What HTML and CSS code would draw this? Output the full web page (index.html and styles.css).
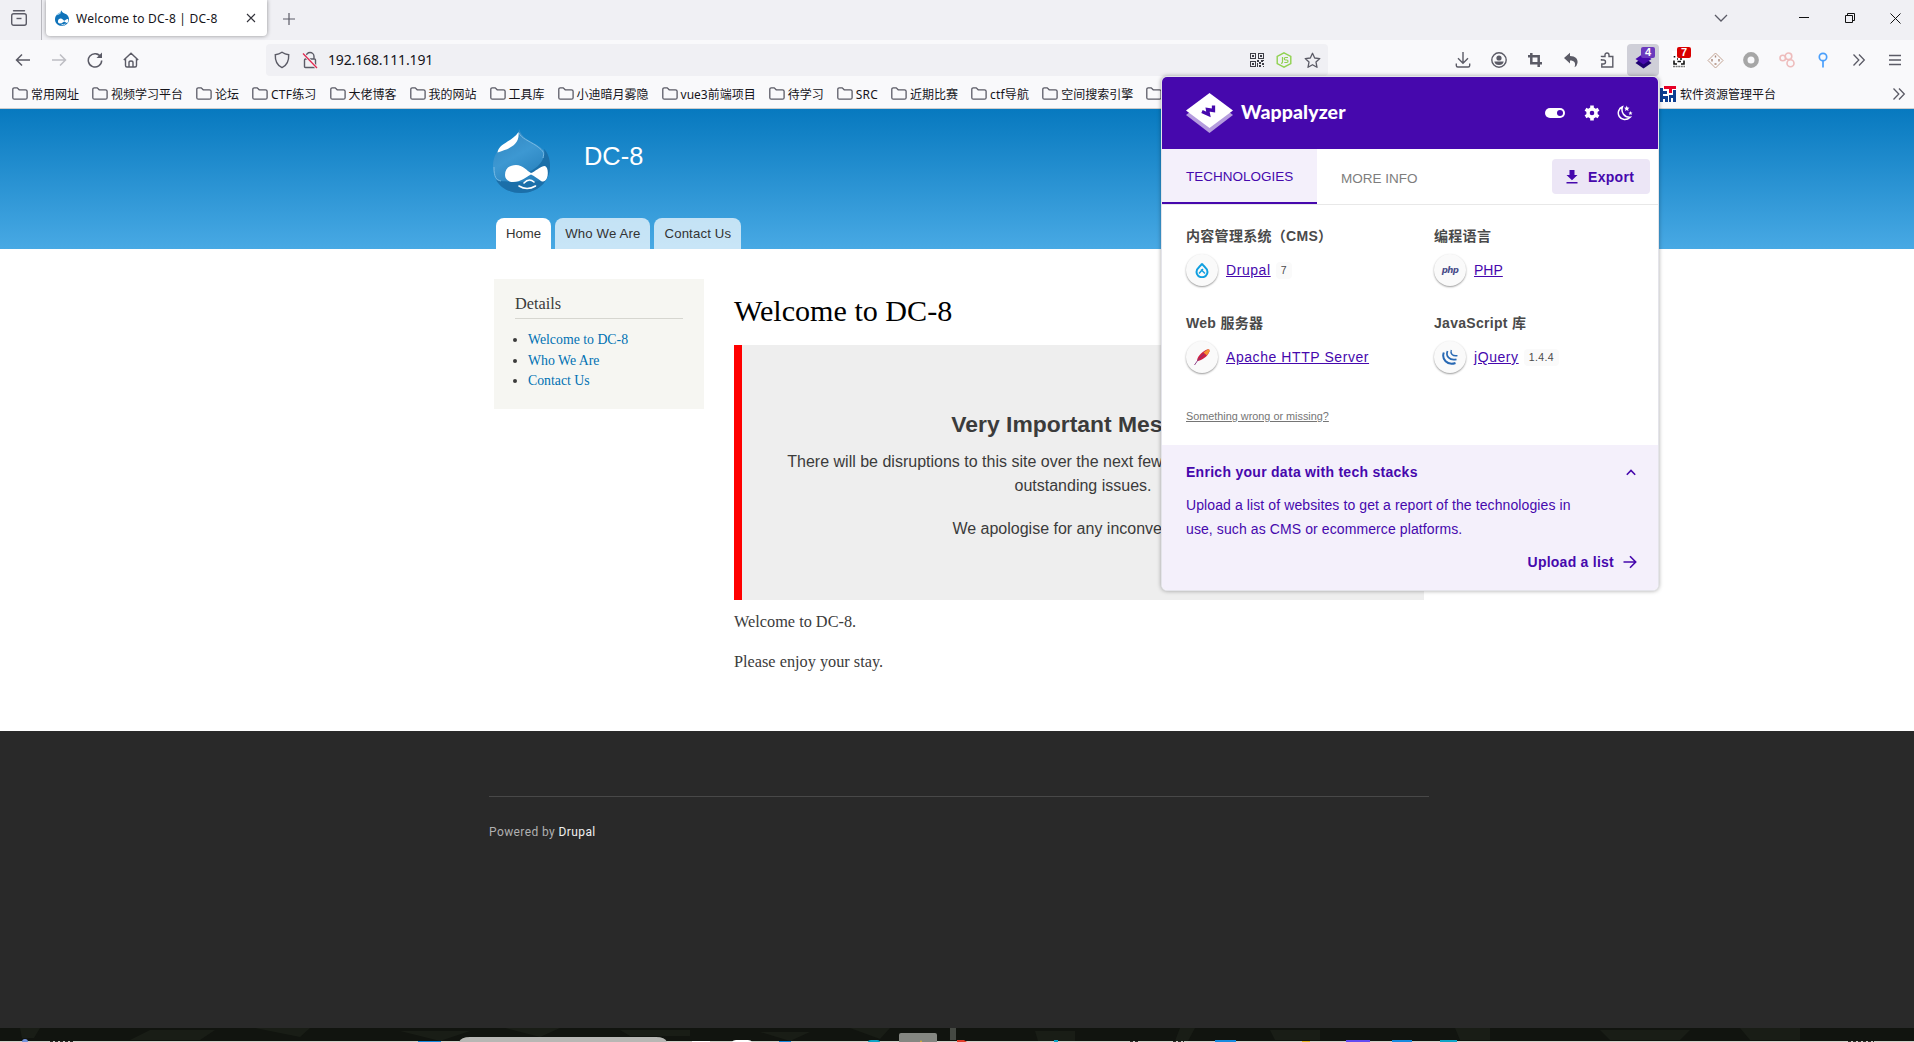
FILE: index.html
```html
<!DOCTYPE html>
<html lang="zh-CN">
<head>
	<meta charset="UTF-8">
	<meta name="viewport" content="width=device-width, initial-scale=1.0">
	<title>Welcome to DC-8 | DC-8</title>
	<link rel="stylesheet" href="styles.css">
</head>
<body>
	<svg class="defs" width="0" height="0">
		<symbol id="folder" viewBox="0 0 16 16"><path d="M.8 11.7V3.3C.8 2.300 1.300 1.800 2.300 1.800H5.200L7.200 3.800H13.500C14.500 3.800 15.100 4.400 15.100 5.300V11.700C15.100 12.700 14.500 13.200 13.500 13.200H2.300C1.300 13.200.8 12.700.8 11.700Z" fill="none" stroke="#5b5b66" stroke-width="1.300"/></symbol>
		<symbol id="more" viewBox="0 0 14 14"><path d="M1.500 1.500 6.800 7 1.500 12.500M7 1.500 12.300 7 7 12.500" fill="none" stroke="#5b5b66" stroke-width="1.300"/></symbol>
		<linearGradient id="drop-fill" x1="0" y1="0" x2="0.5" y2="1">
			<stop offset="0" stop-color="#2f83bd"/><stop offset=".5" stop-color="#3d98d2"/><stop offset="1" stop-color="#237cb8"/>
		</linearGradient>
	</svg>

	<div class="tab-bar">
		<div class="tab-view">
			<svg width="18" height="18" viewBox="0 0 18 18" fill="none" stroke="#5b5b66" stroke-width="1.400"><path d="M3.500 1.700H14.500" stroke-linecap="round"/><rect x="1.700" y="4.700" width="14.600" height="11.600" rx="2"/><path d="M6.500 9.500H11.500"/></svg>
		</div>
		<div class="tab">
			<svg width="14" height="16" viewBox="0 0 57 64"><path d="M26 0C28 10 36 11 46 17C53 22 57 29 57 37C57 53 44 64 28 64S0 53 0 37C0 28 4 22 11 16C18 11 25 9 26 0Z" fill="#0f73ba"/><path d="M5 22C8 13 20 13 25 7C26 16 12 20 5 22Z" fill="#9cd0ee"/><path d="M12 46C12 39 17 34 23 34C30 34 34 41 38 43C42 41 47 35 52 36C56 38 55 52 48 52C45 51 41 48 38 46C33 49 28 54 20 54C15 54 12 51 12 46Z" fill="#fff"/><path d="M26 57Q34 63 43 56" stroke="#fff" stroke-width="3" fill="none"/></svg>
			<span class="tab-title">Welcome to DC-8 | DC-8</span>
			<svg width="10" height="10" viewBox="0 0 10 10"><path d="M1 1 9 9M9 1 1 9" stroke="#33333b" stroke-width="1.100"/></svg>
		</div>
		<svg class="new-tab" width="12" height="12" viewBox="0 0 12 12"><path d="M6 0V12M0 6H12" stroke="#5b5b66" stroke-width="1.200"/></svg>
		<div class="window-buttons">
			<svg width="14" height="8" viewBox="0 0 14 8"><path d="M1 1 7 7 13 1" fill="none" stroke="#5b5b66" stroke-width="1.300"/></svg>
			<svg width="10" height="10" viewBox="0 0 10 10"><path d="M0 4.500H10" stroke="#111"/></svg>
			<svg width="10" height="10" viewBox="0 0 10 10"><path d="M.5 2.500H7.500V9.500H.5ZM2.500 2.500V.5H9.500V7.500H7.500" fill="none" stroke="#111"/></svg>
			<svg width="11" height="11" viewBox="0 0 11 11"><path d="M.5 .5 10.500 10.500M10.500 .5 .5 10.500" stroke="#111"/></svg>
		</div>
	</div>

	<div class="nav-bar">
		<div class="nav-buttons">
			<svg width="16" height="16" viewBox="0 0 16 16"><path d="M15 8H1.500M7 2.500 1.500 8 7 13.500" fill="none" stroke="#5b5b66" stroke-width="1.500"/></svg>
			<svg width="16" height="16" viewBox="0 0 16 16"><path d="M1 8H14.500M9 2.500 14.500 8 9 13.500" fill="none" stroke="#bdbdc3" stroke-width="1.500"/></svg>
			<svg width="16" height="16" viewBox="0 0 16 16"><path d="M13.800 5A6.700 6.700 0 1 0 14.700 8.500" fill="none" stroke="#5b5b66" stroke-width="1.500"/><path d="M15 .5V6H9.500Z" fill="#5b5b66"/></svg>
			<svg width="16" height="16" viewBox="0 0 16 16"><path d="M.8 8 8 1.200 15.200 8M2.500 6.500V13.500Q2.500 15 4 15H12Q13.500 15 13.500 13.500V6.500M6 15V10.500Q6 9 8 9T10 10.500V15" fill="none" stroke="#5b5b66" stroke-width="1.400"/></svg>
		</div>
		<div class="url-bar">
			<svg width="16" height="18" viewBox="0 0 16 18"><path d="M8 1.200Q11 3.300 14.700 3.700C15 10 12.500 14.500 8 16.600C3.500 14.500 1 10 1.300 3.700Q5 3.300 8 1.200Z" fill="none" stroke="#5b5b66" stroke-width="1.400"/></svg>
			<svg width="16" height="18" viewBox="0 0 16 18"><path d="M4 8V5.500A4 4 0 0 1 12 5.500V8M3.500 8H12.500Q13.500 8 13.500 9V15.500Q13.500 16.500 12.500 16.500H3.500Q2.500 16.500 2.500 15.500V9Q2.500 8 3.500 8Z" fill="none" stroke="#5b5b66" stroke-width="1.400"/><path d="M1 2.500 15 17" stroke="#f0f0f4" stroke-width="3"/><path d="M1 2.500 15 17" stroke="#e22850" stroke-width="1.300"/></svg>
			<span class="url">192.168.111.191</span>
			<svg width="14" height="14" viewBox="0 0 14 14" fill="#3d3d45"><path d="M0 0H6V6H0ZM1 1V5H5V1ZM8 0H14V6H8ZM9 1V5H13V1ZM0 8H6V14H0ZM1 9V13H5V9Z" fill-rule="evenodd"/><path d="M2 2H4V4H2ZM10 2H12V4H10ZM2 10H4V12H2ZM7 7H9V9H7ZM9 9H11V11H9ZM11 7H14V8H13V9H11ZM7 10H8V14H7ZM9 12H11V14H9ZM12 10H14V12H12ZM13 13H14V14H13Z"/></svg>
			<svg width="16" height="16" viewBox="0 0 16 16" fill="none" stroke="#8fd14f" stroke-width="1.400"><path d="M8 .8 14.800 4.500V11.500L8 15.200 1.200 11.500V4.500Z"/><path d="M6.500 5V10Q6.500 11.300 5 11.300M12 5.500H9.500Q8.300 5.500 8.300 6.700T9.500 8H10.800Q12 8 12 9.200T10.800 10.500H8.300" stroke-width="1.200"/></svg>
			<svg width="17" height="17" viewBox="0 0 17 17"><path d="M8.500 1.300 10.700 6 15.800 6.600 12 10.100 13 15.300 8.500 12.700 4 15.300 5 10.100 1.200 6.600 6.300 6Z" fill="none" stroke="#5b5b66" stroke-width="1.300" stroke-linejoin="round"/></svg>
		</div>
		<div class="toolbar">
			<div class="tool"><svg width="16" height="16" viewBox="0 0 16 16"><path d="M8 0V11M3 6.300 8 11.200 13 6.300M1.300 11.500V13.500Q1.300 15 2.800 15H13.200Q14.700 15 14.700 13.500V11.500" fill="none" stroke="#5b5b66" stroke-width="1.400"/></svg></div>
			<div class="tool"><svg width="16" height="16" viewBox="0 0 16 16"><circle cx="8" cy="8" r="7.200" fill="none" stroke="#5b5b66" stroke-width="1.400"/><circle cx="8" cy="6" r="2.600" fill="#5b5b66"/><path d="M3.300 9.500H12.700Q12 13 8 13T3.300 9.500Z" fill="#5b5b66"/></svg></div>
			<div class="tool"><svg width="16" height="16" viewBox="0 0 16 16"><path d="M4.300 1V11.200H15M1 4.300H11.700V15" fill="none" stroke="#5b5b66" stroke-width="2.500"/></svg></div>
			<div class="tool"><svg width="16" height="16" viewBox="0 0 16 16"><path d="M1 6 7 .8V4C12.500 4 15 7 14.500 11Q14 14 11.500 15.200C13 11 11.500 8.500 7 8.500V11.500Z" fill="#5b5b66"/></svg></div>
			<div class="tool"><svg width="16" height="16" viewBox="0 0 16 16"><path d="M2.500 5V4.500H6V3A2 2 0 0 1 10 3V4.500H13.800V15H2.800V12H4.500A2 2 0 0 0 4.500 8H2.500V7" fill="none" stroke="#5b5b66" stroke-width="1.400"/></svg></div>
			<div class="tool active">
				<svg width="17" height="18" viewBox="0 0 17 18"><path d="M.5 12 3 10H14L16.500 12 8.500 17.500Z" fill="#1d0070"/><path d="M.5 8 8.500 2.500 16.500 8 8.500 13.500Z" fill="#4608ad"/></svg>
				<span class="badge badge-purple">4</span>
			</div>
			<div class="tool">
				<svg width="14" height="18" viewBox="0 0 14 18"><rect width="14" height="18" fill="#fff"/><path d="M2.500 5V6.500M2 9.500V13H5M12 9.500V13H9M5 8H6M8 8H10M5.500 10.500H9" fill="none" stroke="#111" stroke-width="1.600"/><path d="M1 15.500H13" stroke="#777" stroke-width="1.500" stroke-dasharray="2 .6"/></svg>
				<span class="badge badge-red">7</span>
			</div>
			<div class="tool"><svg width="17" height="17" viewBox="0 0 17 17" fill="none" stroke="#c3a493"><path d="M8.500 1 16 8.500 8.500 16 1 8.500Z"/><path d="M8.500 3.500V5.500M5 7V9.500M12 7V9.500M7.500 12H9.500" stroke-width="1.400" stroke="#a98778"/></svg></div>
			<div class="tool"><svg width="16" height="16" viewBox="0 0 16 16"><circle cx="8" cy="8" r="5.700" fill="none" stroke="#a6a6a6" stroke-width="4.400"/></svg></div>
			<div class="tool"><svg width="16" height="16" viewBox="0 0 16 16" fill="none" stroke="#eebcbc" stroke-width="1.600"><circle cx="3.800" cy="6" r="2.800"/><circle cx="9.500" cy="4.300" r="3.300"/><circle cx="11.500" cy="11.300" r="3.500"/></svg></div>
			<div class="tool"><svg width="10" height="16" viewBox="0 0 10 16" fill="none" stroke="#4a9ffb" stroke-width="1.700"><circle cx="5" cy="5" r="3.700"/><path d="M5 8.500V15.500"/></svg></div>
			<div class="tool"><svg width="14" height="14"><use href="#more"/></svg></div>
			<div class="tool"><svg width="14" height="12" viewBox="0 0 14 12"><path d="M1 1.500H13M1 6H13M1 10.500H13" stroke="#5b5b66" stroke-width="1.400"/></svg></div>
		</div>
	</div>

	<div class="bookmarks">
		<div class="bookmark"><svg width="16" height="16"><use href="#folder"/></svg>常用网址</div>
		<div class="bookmark"><svg width="16" height="16"><use href="#folder"/></svg>视频学习平台</div>
		<div class="bookmark"><svg width="16" height="16"><use href="#folder"/></svg>论坛</div>
		<div class="bookmark latin"><svg width="16" height="16"><use href="#folder"/></svg>CTF练习</div>
		<div class="bookmark"><svg width="16" height="16"><use href="#folder"/></svg>大佬博客</div>
		<div class="bookmark"><svg width="16" height="16"><use href="#folder"/></svg>我的网站</div>
		<div class="bookmark"><svg width="16" height="16"><use href="#folder"/></svg>工具库</div>
		<div class="bookmark"><svg width="16" height="16"><use href="#folder"/></svg>小迪暗月雾隐</div>
		<div class="bookmark"><svg width="16" height="16"><use href="#folder"/></svg>vue3前端项目</div>
		<div class="bookmark"><svg width="16" height="16"><use href="#folder"/></svg>待学习</div>
		<div class="bookmark latin"><svg width="16" height="16"><use href="#folder"/></svg>SRC</div>
		<div class="bookmark"><svg width="16" height="16"><use href="#folder"/></svg>近期比赛</div>
		<div class="bookmark latin"><svg width="16" height="16"><use href="#folder"/></svg>ctf导航</div>
		<div class="bookmark"><svg width="16" height="16"><use href="#folder"/></svg>空间搜索引擎</div>
		<div class="bookmark"><svg width="16" height="16"><use href="#folder"/></svg></div>
		<div class="bookmark bookmark-last">
			<svg width="16" height="16" viewBox="0 0 16 16"><path d="M0 0H16V16H0Z" fill="#fff"/><path d="M4 0H16V3H12V7H9V3H4Z" fill="#e60026"/><path d="M0 2H3V5H7V8H3V10H8V16H5V13H3V16H0ZM13 4H16V16H13V12H11V16H9V9H13Z" fill="#0c3d91"/></svg>软件资源管理平台
		</div>
		<svg class="bookmarks-more" width="14" height="14"><use href="#more"/></svg>
	</div>

	<div class="site-header">
		<div class="container">
			<div class="brand">
				<svg class="logo" width="57" height="64" viewBox="0 0 57 64">
					<path d="M26 0C29 9 35 11 44 16C53 21.500 57 29 57 37C57 53 44 64 28 64S0 53 0 37C0 28 4 21 11 16C18 11 26 9 26 0Z" fill="url(#drop-fill)"/>
					<path d="M51 20C53 30 46 38 36 43L48 51C46 54 6 53 3 51C8 60 18 64 28 64C44 64 57 53 57 37C57 30 55 24 51 20Z" fill="#1b6fa9"/>
					<path d="M26 4C28 9 36 12 43 16.500C52 23 51 24 50 29M1 38C1 48 3 51 8 52" stroke="#76b9e3" stroke-width="1" fill="none"/>
					<path d="M4.500 23.500C6 14 19 13 25.500 3C27 17 15 20 4.500 23.500Z" fill="#fff"/>
					<path d="M12 46C12 39 17 36 23 36C30 36 34 42 38 44C42 43 47 37 52 37C55 38 55.500 45 54 49C52 53 50 53 48 52C45 50 41 47 38 45.500C33 48 28 53 20 53C15 53 12 50 12 46Z" fill="#fff"/>
					<path d="M31 54Q36 48.500 41 53M26 57Q34 62 42.500 57" stroke="#fff" stroke-width="1.600" stroke-linecap="round" fill="none"/>
				</svg>
				<span class="site-name">DC-8</span>
			</div>
			<div class="menu">
				<a class="menu-item current">Home</a>
				<a class="menu-item">Who We Are</a>
				<a class="menu-item">Contact Us</a>
			</div>
		</div>
	</div>

	<div class="main">
		<div class="sidebar">
			<h2>Details</h2>
			<ul>
				<li><a>Welcome to DC-8</a></li>
				<li><a>Who We Are</a></li>
				<li><a>Contact Us</a></li>
			</ul>
		</div>
		<div class="content">
			<h1>Welcome to DC-8</h1>
			<div class="notice">
				<h2>Very Important Message</h2>
				<p>There will be disruptions to this site over the next few days while we resolve various<br>outstanding issues.</p>
				<p>We apologise for any inconvenience.</p>
			</div>
			<p>Welcome to DC-8.</p>
			<p>Please enjoy your stay.</p>
		</div>
	</div>

	<div class="footer">
		<div class="footer-inner">Powered by <a>Drupal</a></div>
	</div>

	<!-- top edge of the desktop taskbar -->
	<svg class="taskbar" width="1914" height="14" viewBox="0 0 1914 14">
		<rect width="1914" height="14" fill="#11140f"/>
		<path d="M20 0H40L34 10H22ZM150 2H215L200 12H130ZM255 0H310L300 9ZM400 3H470L440 13ZM505 0H560L540 9ZM620 2H690V8H630ZM760 4H810L790 13ZM850 0H890L880 11ZM1035 3H1075V13H1038ZM1180 0H1195L1188 13H1175ZM1270 2H1320V12H1275ZM1455 0H1490V12H1460ZM1600 2H1690L1680 12H1610ZM1740 0H1800V12H1750Z" fill="#191d16"/>
		<rect y="13" width="1914" height="1" fill="#cfd1c8"/>
		<path d="M459 14Q461 9 470 9H656Q665 9 667 14Z" fill="#b7b7b4"/>
		<path d="M899 14V7Q899 5 901 5H935Q937 5 937 7V14Z" fill="#858782"/>
		<rect x="950" width="6" height="12" fill="#454943"/>
		<path d="M418 13H441V14H418ZM779 13H791V14H779ZM1215 12H1236V14H1215ZM1392 12H1412V14H1392Z" fill="#168bdf"/>
		<path d="M732 14Q733 12 736 12H748Q751 12 752 14ZM692 13H710V14H692Z" fill="#fff"/>
		<path d="M868 14Q868 12 871 12H877Q880 12 880 14ZM1440 12H1457V14H1440ZM1054 12H1058V14H1054Z" fill="#0ea5c6"/>
		<path d="M920 14L921 12L922 14ZM1302 13H1310V14H1302Z" fill="#e5b721"/>
		<path d="M957 14V12H964L967 14Z" fill="#e03b28"/>
		<rect x="1346" y="12" width="24" height="2" fill="#624bf2"/>
		<circle cx="25" cy="14" r="3" fill="#7594dc"/>
		<path d="M50 13.500H74M1848 13.500H1874M1130 13.500H1139M1173 13.500H1184" stroke="#30302c" stroke-dasharray="3 2"/>
	</svg>

	<div class="popup">
		<div class="popup-header">
			<svg width="47" height="40" viewBox="0 0 47 40"><path d="M0 22 23.500 4 47 22 23.500 40Z" fill="#b59cde"/><path d="M0 17.500 23.500 0 47 17.500 23.500 35Z" fill="#fff"/><path d="M16 18.500 22.500 21.500 21.500 16.500 27.500 17.500 27.500 12.500" fill="none" stroke="#4608ad" stroke-width="3.300"/></svg>
			<span class="popup-name">Wappalyzer</span>
			<div class="popup-actions">
				<svg width="20" height="10" viewBox="0 0 20 10"><rect width="20" height="10" rx="5" fill="#fff"/><circle cx="15" cy="5" r="3" fill="#4608ad"/></svg>
				<svg width="16" height="16" viewBox="0 0 16 16"><circle cx="8" cy="8" r="4" fill="none" stroke="#fff" stroke-width="3.400"/><path d="M8 .5V3.500M8 12.500V15.500M1.500 4.250 4.100 5.750M11.900 10.250 14.500 11.750M1.500 11.750 4.100 10.250M11.900 5.750 14.500 4.250" stroke="#fff" stroke-width="3.600"/></svg>
				<svg width="16" height="16" viewBox="0 0 16 16"><path d="M5.500 1.800C1.500 3.500.2 8 2.300 11.500S9.500 15.800 13.200 12.200C7.500 12.500 3.500 7.500 5.500 1.800Z" fill="none" stroke="#fff" stroke-width="1.500"/><path d="M9.700.5 10.500 2.500 12.500 2.700 11 4 11.500 6 9.700 5 8 6 8.500 4 7 2.700 9 2.500ZM13.500 6 14.200 7.400 15.500 7.600 14.500 8.600 14.700 10 13.500 9.300 12.200 10 12.500 8.600 11.500 7.600 12.900 7.400Z" fill="#fff"/></svg>
			</div>
		</div>
		<div class="popup-tabs">
			<div class="popup-tab selected">TECHNOLOGIES</div>
			<div class="popup-tab">MORE INFO</div>
			<div class="export-btn">
				<svg width="12" height="14" viewBox="0 0 12 14"><path d="M3.500 0H8.500V5H11.500L6 10.300.5 5H3.500ZM.5 12H11.500V13.500H.5Z" fill="#4608ad"/></svg>
				Export
			</div>
		</div>
		<div class="tech-grid">
			<div class="tech">
				<h3>内容管理系统（CMS）</h3>
				<div class="tech-row">
					<span class="tech-icon"><svg width="14" height="16" viewBox="0 0 14 16"><path d="M7 1.500C7.500 4 12.500 5.500 12.500 10A5.500 5.200 0 0 1 1.500 10C1.500 5.500 6.500 4 7 1.500Z" fill="none" stroke="#109fe0" stroke-width="2"/><path d="M4 11.500 8 7M6 7.500 10 11.500" stroke="#109fe0" stroke-width="1.500"/></svg></span>
					<a>Drupal</a><span class="version">7</span>
				</div>
			</div>
			<div class="tech">
				<h3>编程语言</h3>
				<div class="tech-row">
					<span class="tech-icon php">php</span>
					<a class="php-link">PHP</a>
				</div>
			</div>
			<div class="tech">
				<h3>Web 服务器</h3>
				<div class="tech-row">
					<span class="tech-icon"><svg width="16" height="16" viewBox="0 0 16 16"><path d="M3 12C3 7 10 1 14 .3Q16 .2 15.500 2.300C14 7 8 12 3 12Z" fill="#cb2144"/><path d="M9.500 3.500 14 .3Q16 .2 15.500 2.300L13 6.500Z" fill="#f59331"/><path d="M.5 16 4 11 10 5" fill="none" stroke="#84317e" stroke-width=".9"/></svg></span>
					<a>Apache HTTP Server</a>
				</div>
			</div>
			<div class="tech">
				<h3>JavaScript 库</h3>
				<div class="tech-row">
					<span class="tech-icon"><svg width="16" height="16" viewBox="0 0 16 16" fill="none" stroke="#2869b4" stroke-width="2"><path d="M1.800 3.500C-.5 10 5 17 13.500 14"/><path d="M5.500 2C3.500 7 7.500 12 14.500 10.300" stroke-width="1.700"/><path d="M9.300 1C8 4.500 10.500 7.500 15.500 6.600" stroke-width="1.300"/></svg></span>
					<a>jQuery</a><span class="version">1.4.4</span>
				</div>
			</div>
		</div>
		<a class="report">Something wrong or missing?</a>
		<div class="enrich">
			<div class="enrich-title">
				Enrich your data with tech stacks
				<svg width="10" height="7" viewBox="0 0 10 7"><path d="M.8 5.800 5 1.500 9.200 5.800" fill="none" stroke="#4608ad" stroke-width="1.600"/></svg>
			</div>
			<p>Upload a list of websites to get a report of the technologies in<br>use, such as CMS or ecommerce platforms.</p>
			<div class="upload">
				Upload a list
				<svg width="14" height="14" viewBox="0 0 14 14"><path d="M.5 7H12.500M7 1.200 12.700 7 7 12.800" fill="none" stroke="#4608ad" stroke-width="1.600"/></svg>
			</div>
		</div>
	</div>
</body>
</html>
```

FILE: styles.css
```css
* {
	box-sizing: border-box;
}

body {
	margin: 0;
	height: 1042px;
	overflow: hidden;
	position: relative;
	background: #fff;
	color: #3b3b3b;
	font-family: "Liberation Sans", "Noto Sans CJK SC", sans-serif;
}

h1, h2, h3, p, ul {
	margin: 0;
	padding: 0;
}

svg {
	display: block;
	flex: none;
}

.defs {
	position: absolute;
}

/* browser window */
.tab-bar {
	display: flex;
	height: 40px;
	background: #f0f0f4;
	font: 12px "Noto Sans", sans-serif;
	color: #15141a;
}

.tab-view {
	width: 42px;
	padding: 9px 0 0 10px;
	border-right: 1px solid #b9b9bf;
}

.tab {
	display: flex;
	align-items: center;
	width: 221px;
	height: 36px;
	margin-left: 4px;
	padding: 0 11px 0 9px;
	background: #fff;
	border-radius: 0 0 4px 4px;
	box-shadow: 0 0 4px rgba(0, 0, 0, 0.4);
}

.tab-title {
	flex: 1;
	margin-left: 7px;
	font-size: 12px;
	letter-spacing: 0.22px;
	white-space: nowrap;
}

.new-tab {
	margin: 13px 0 0 16px;
}

.window-buttons {
	display: flex;
	align-items: center;
	height: 36px;
	margin-left: auto;
	padding-right: 13px;
}

.window-buttons svg:nth-child(1) {
	margin-right: 71px;
}

.window-buttons svg:nth-child(2) {
	margin-right: 36px;
}

.window-buttons svg:nth-child(3) {
	margin-right: 35px;
}

.nav-bar {
	display: flex;
	align-items: center;
	height: 40px;
	background: #f9f9fb;
}

.nav-buttons {
	display: flex;
	gap: 20px;
	width: 266px;
	padding-left: 15px;
}

.url-bar {
	display: flex;
	align-items: center;
	width: 1062px;
	height: 32px;
	padding: 0 7px 0 8px;
	gap: 12px;
	background: #f0f0f4;
	border-radius: 4px;
}

.url {
	flex: 1;
	font: 14px "Noto Sans", sans-serif;
	letter-spacing: -0.15px;
	color: #15141a;
	margin: -1px 0 0 -2px;
}

.toolbar {
	display: flex;
	gap: 4px;
	margin-left: auto;
	padding-right: 3px;
}

.tool {
	display: flex;
	align-items: center;
	justify-content: center;
	position: relative;
	width: 32px;
	height: 32px;
	border-radius: 4px;
}

.tool.active {
	background: #cfcfd8;
}

.badge {
	position: absolute;
	top: 3px;
	right: 4px;
	width: 14px;
	height: 11px;
	border-radius: 2px;
	color: #fff;
	font: bold 11px/11px "Liberation Sans", sans-serif;
	text-align: center;
}

.badge-purple {
	background: #6b39bd;
}

.badge-red {
	background: #d90000;
}

.bookmarks {
	display: flex;
	align-items: center;
	gap: 13px;
	height: 29px;
	padding: 0 8px 0 12px;
	background: #f9f9fb;
	border-bottom: 1px solid #cccccc;
	color: #15141a;
	font: 12px "Noto Sans", "Noto Sans CJK SC", sans-serif;
}

.bookmark {
	display: flex;
	align-items: center;
	gap: 3px;
	height: 28px;
	white-space: nowrap;
}

.bookmark.latin {
	letter-spacing: 0.2px;
}

.bookmark-last {
	margin-left: auto;
	gap: 4px;
}

.bookmarks-more {
	margin-left: 103px;
}

/* site */
.site-header {
	height: 140px;
	background: linear-gradient(#0779bf, #48a9e4);
}

.container {
	display: flex;
	flex-direction: column;
	justify-content: space-between;
	width: 936px;
	height: 140px;
	margin: 0 auto 0 493px;
	padding-top: 20px;
}

.brand {
	display: flex;
}

.site-name {
	margin: 12px 0 0 34px;
	font-size: 25.4px;
	line-height: 30px;
	color: #fff;
}

.menu {
	display: flex;
	gap: 4px;
	padding-left: 3px;
}

.menu-item {
	height: 31px;
	padding: 0 10px;
	border-radius: 8px 8px 0 0;
	background: rgba(255, 255, 255, 0.7);
	color: #333;
	font-size: 13.2px;
	line-height: 31px;
	letter-spacing: 0.15px;
}

.menu-item.current {
	background: #fff;
	letter-spacing: 0;
}

.main {
	display: flex;
	gap: 30px;
	height: 482px;
	padding: 30px 0 0 494px;
	font-family: "Liberation Serif", serif;
}

.sidebar {
	width: 210px;
	height: 130px;
	padding: 13px 21px;
	background: #f6f6f2;
}

.sidebar h2 {
	height: 27px;
	border-bottom: 1px solid #d6d6d0;
	font-size: 16.3px;
	font-weight: normal;
	line-height: 24px;
}

.sidebar ul {
	margin-top: 11px;
	padding-left: 13px;
	font-size: 13.8px;
	line-height: 20.5px;
}

.sidebar a {
	color: #0071b3;
}

.content {
	width: 690px;
	font-size: 16.3px;
}

.content h1 {
	margin: 15px 0 17px;
	font-size: 30.1px;
	font-weight: normal;
	line-height: 34px;
	color: #000;
}

.content > p {
	margin-bottom: 16px;
	line-height: 24px;
}

.notice {
	height: 255px;
	margin-bottom: 10px;
	padding-top: 65px;
	background: #eee;
	border-left: 8px solid #f00;
	font-family: "Liberation Sans", sans-serif;
	text-align: center;
}

.notice h2 {
	font-size: 22.9px;
	line-height: 28px;
	margin-bottom: 12px;
}

.notice p {
	margin-bottom: 19px;
	font-size: 16px;
	line-height: 24px;
	white-space: nowrap;
}

.footer {
	height: 297px;
	padding: 65px 0 0 489px;
	background: #292929;
}

.footer-inner {
	width: 940px;
	padding-top: 27px;
	border-top: 1px solid #484848;
	color: #b0b0b0;
	font: 12px/16px Roboto, sans-serif;
	letter-spacing: 0.4px;
}

.footer-inner a {
	color: #f0f0f0;
}

/* extension popup */
.popup {
	position: absolute;
	top: 76px;
	left: 1161px;
	width: 498px;
	height: 515px;
	border: 1px solid #e4e4ea;
	border-radius: 6px;
	overflow: hidden;
	background: #fff;
	box-shadow: 0 0 4px rgba(0, 0, 0, 0.35);
}

.popup-header {
	display: flex;
	align-items: center;
	height: 72px;
	padding: 0 25px 0 24px;
	background: #4608ad;
}

.popup-name {
	margin: -3px 0 0 8px;
	color: #fff;
	font: 900 19.5px Lato, sans-serif;
	letter-spacing: 0.1px;
}

.popup-actions {
	display: flex;
	align-items: center;
	gap: 17px;
	margin-left: auto;
}

.popup-actions svg:first-child {
	margin-right: 2px;
}

.popup-tabs {
	display: flex;
	height: 56px;
	border-bottom: 1px solid #e8e8e8;
}

.popup-tab {
	height: 55px;
	padding: 3px 24px 0;
	color: #7d7d7d;
	font-size: 13.5px;
	line-height: 54px;
}

.popup-tab.selected {
	width: 155px;
	padding-top: 1px;
	background: #f4f0fb;
	border-bottom: 2px solid #4608ad;
	color: #4608ad;
}

.export-btn {
	display: flex;
	align-items: center;
	gap: 10px;
	width: 98px;
	height: 35px;
	margin: 10px 8px 0 auto;
	padding-left: 14px;
	border-radius: 4px;
	background: #ece6f6;
	color: #4608ad;
	font-size: 14px;
	font-weight: bold;
	letter-spacing: 0.3px;
}

.tech-grid {
	display: grid;
	grid-template-columns: 248px 224px;
	grid-auto-rows: 87px;
	padding: 20px 0 0 24px;
}

.tech h3 {
	height: 22px;
	font-size: 14px;
	line-height: 22px;
	letter-spacing: 0.3px;
	color: #4a4a4a;
}

.tech-row {
	display: flex;
	align-items: center;
	margin-top: 7px;
	font-size: 14px;
	letter-spacing: 0.57px;
}

.tech-row a {
	color: #4608ad;
	text-decoration: underline;
}

.tech-row .php-link {
	letter-spacing: 0;
}

.tech-icon {
	display: flex;
	align-items: center;
	justify-content: center;
	width: 32px;
	height: 32px;
	margin-right: 8px;
	border-radius: 50%;
	background: #fafafa;
	box-shadow: 0 1px 2px rgba(0, 0, 0, 0.4);
}

.php {
	color: #484c89;
	font: italic bold 8.5px "DejaVu Sans", sans-serif;
	letter-spacing: -0.5px;
}

.version {
	margin-left: 5px;
	padding: 0 5px;
	border-radius: 4px;
	background: #fafafa;
	color: #4a4a4a;
	font-size: 10.5px;
	line-height: 17px;
	letter-spacing: 0.4px;
}

.report {
	display: block;
	height: 46px;
	margin: 0 24px;
	color: #757575;
	font-size: 10.85px;
	line-height: 34px;
	text-decoration: underline;
}

.enrich {
	height: 145px;
	padding: 17px 21px 0 24px;
	background: #f4f0fb;
	color: #4608ad;
	font-size: 14px;
	letter-spacing: 0.1px;
}

.enrich-title {
	display: flex;
	align-items: center;
	justify-content: space-between;
	height: 20px;
	padding-right: 1px;
	font-weight: bold;
	letter-spacing: 0.28px;
}

.enrich p {
	margin-top: 11px;
	line-height: 24px;
}

.upload {
	display: flex;
	align-items: center;
	justify-content: flex-end;
	gap: 9px;
	height: 18px;
	margin-top: 12px;
	font-weight: bold;
	letter-spacing: 0.25px;
}
```
